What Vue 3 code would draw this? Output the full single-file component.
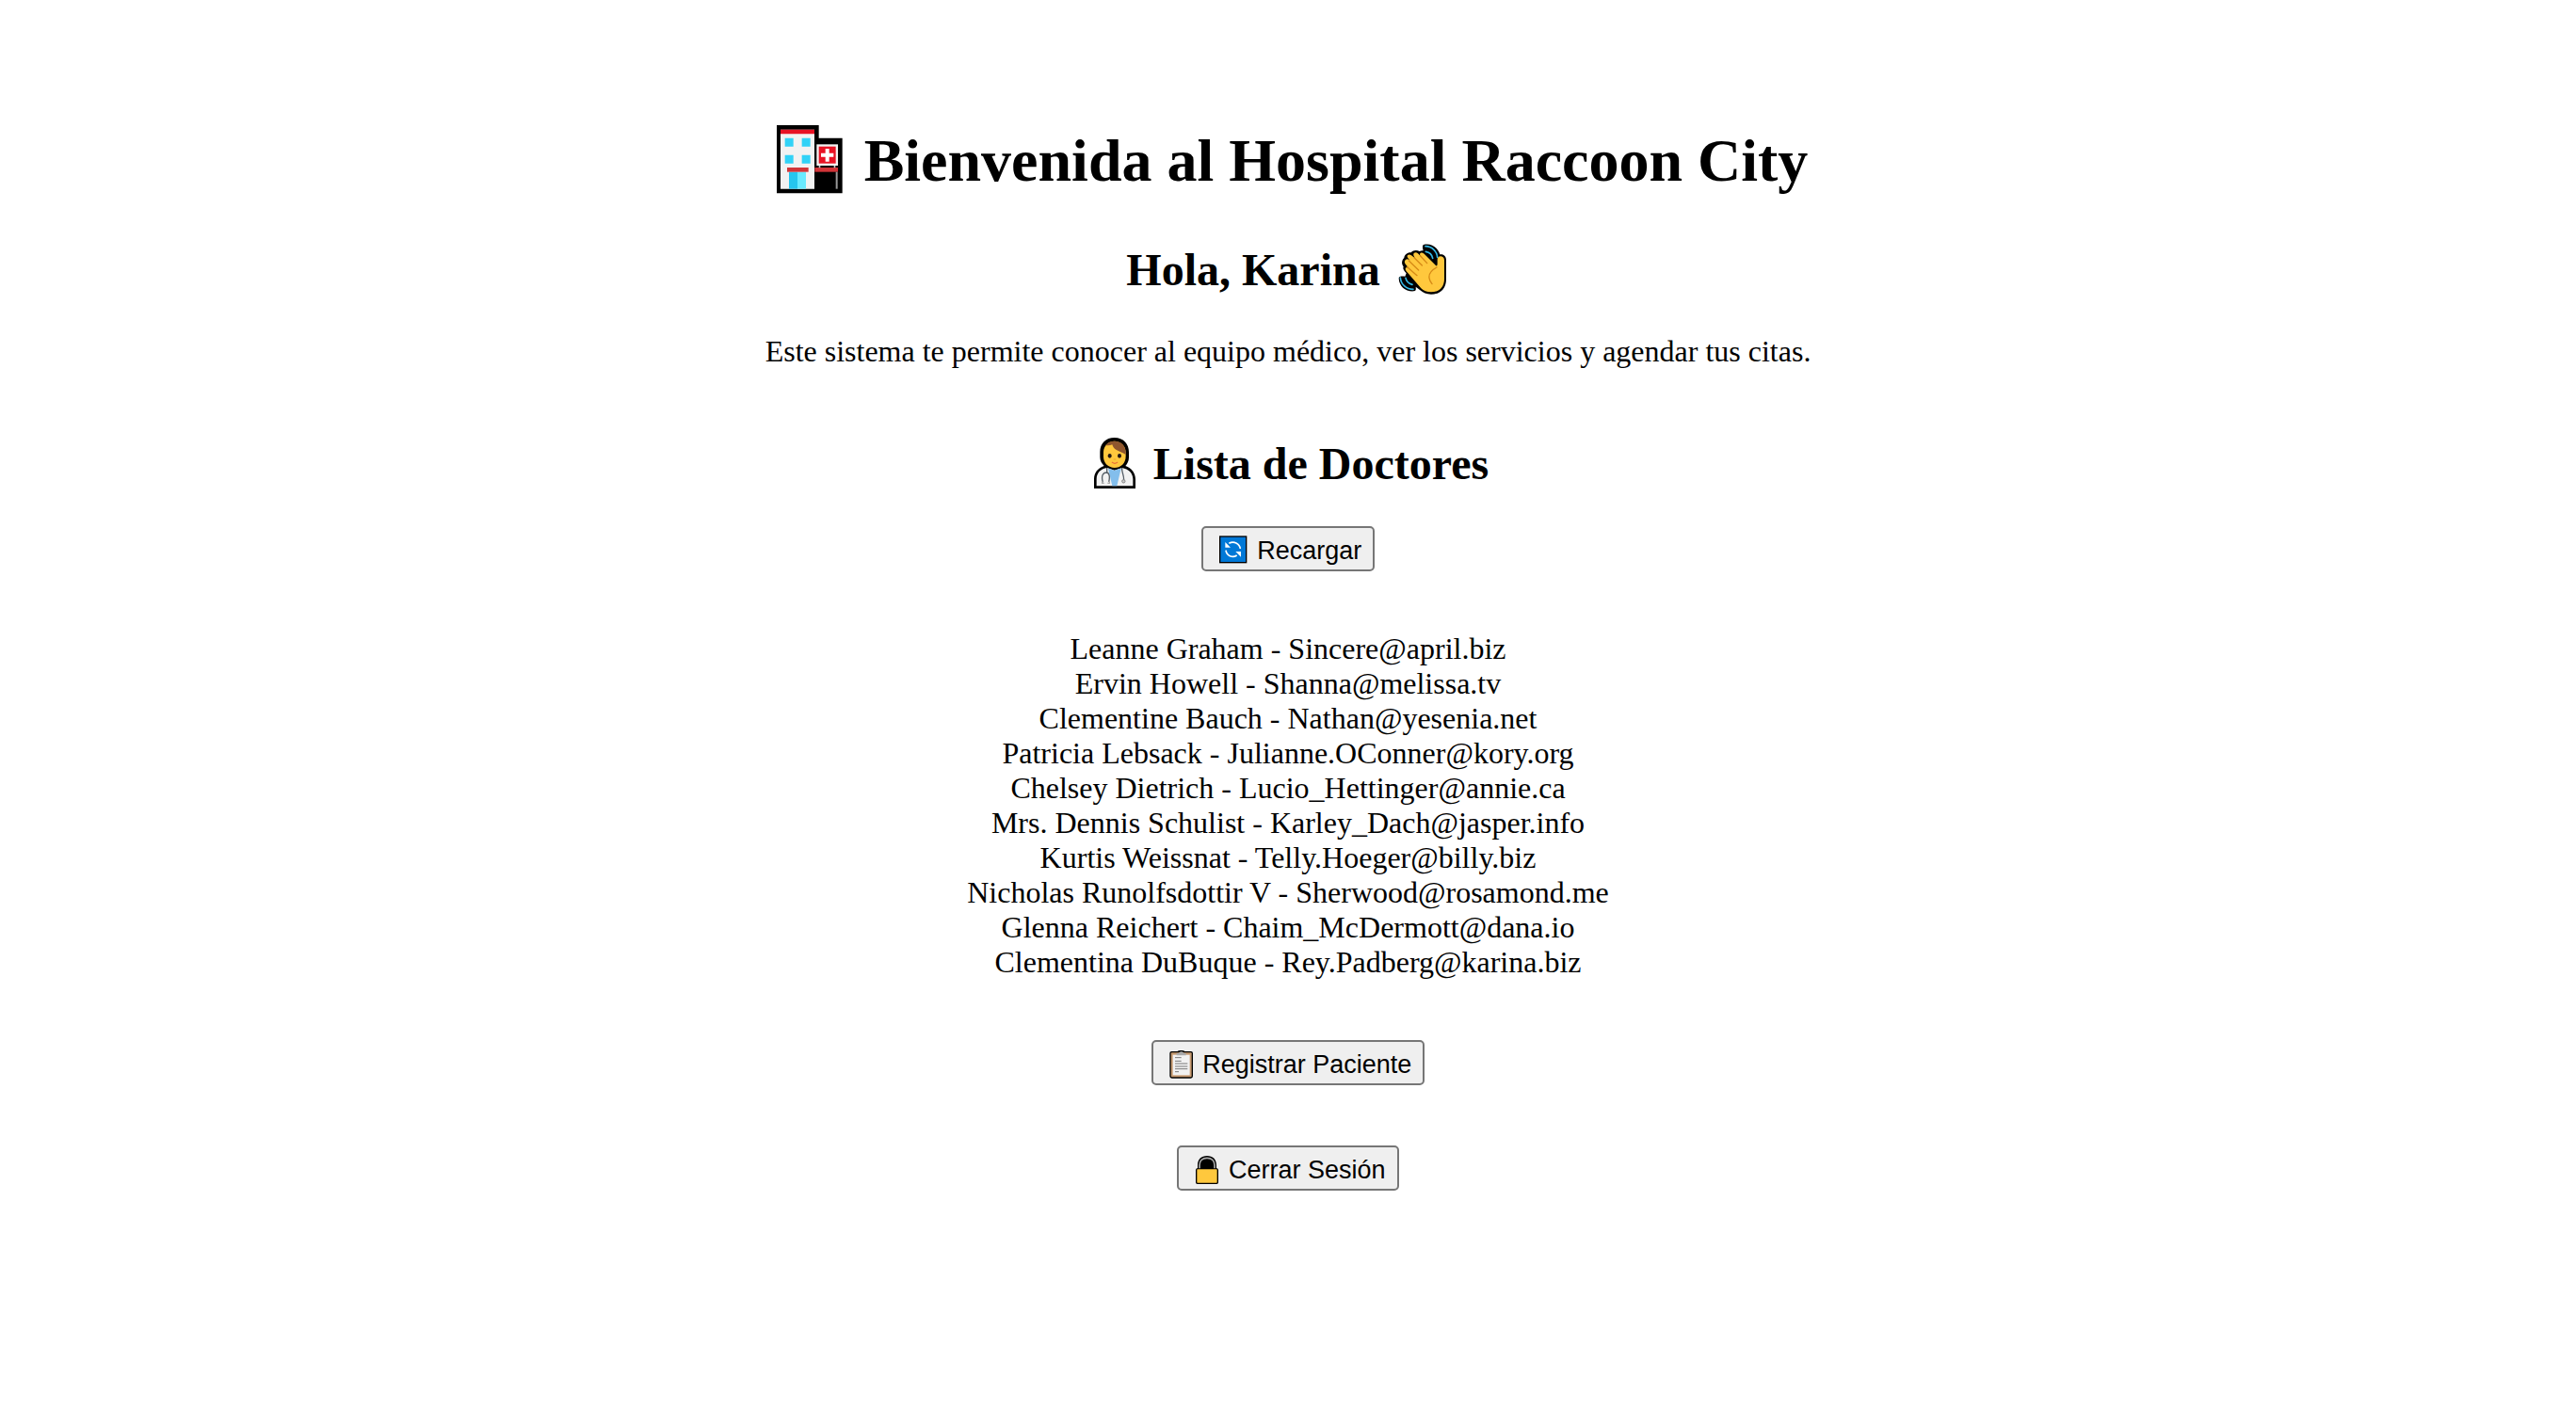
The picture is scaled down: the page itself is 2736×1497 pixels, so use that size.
<script setup>
import { ref } from 'vue'

const nombre = ref('Karina')
const doctores = ref([
  { id: 1, name: 'Leanne Graham', email: 'Sincere@april.biz' },
  { id: 2, name: 'Ervin Howell', email: 'Shanna@melissa.tv' },
  { id: 3, name: 'Clementine Bauch', email: 'Nathan@yesenia.net' },
  { id: 4, name: 'Patricia Lebsack', email: 'Julianne.OConner@kory.org' },
  { id: 5, name: 'Chelsey Dietrich', email: 'Lucio_Hettinger@annie.ca' },
  { id: 6, name: 'Mrs. Dennis Schulist', email: 'Karley_Dach@jasper.info' },
  { id: 7, name: 'Kurtis Weissnat', email: 'Telly.Hoeger@billy.biz' },
  { id: 8, name: 'Nicholas Runolfsdottir V', email: 'Sherwood@rosamond.me' },
  { id: 9, name: 'Glenna Reichert', email: 'Chaim_McDermott@dana.io' },
  { id: 10, name: 'Clementina DuBuque', email: 'Rey.Padberg@karina.biz' }
])
</script>

<template>
  <main class="home">
    <h1>
      <svg class="hospital" viewBox="45 70 258 219" aria-hidden="true">
        <path d="M72 70H206V111H281V287H72Z" fill="#000" />
        <path d="M84 84H192V273H84Z" fill="#f2f2f2" />
        <path d="M84 84H192V98H84Z" fill="#e81224" />
        <path d="M98 111H125V138H98ZM152 111H179V138H152ZM98 165H125V192H98ZM152 165H179V192H152Z" fill="#31d2f7" />
        <path d="M111 219H138V273H111Z" fill="#26c6ee" />
        <path d="M138 219H165V273H138Z" fill="#69eaff" />
        <path d="M105 205H173V219H105Z" fill="#d13438" />
        <path d="M193 205H267V219H193Z" fill="#d13438" />
        <path d="M206 196H211V206H206ZM254 196H259V206H254Z" fill="#ccc" />
        <path d="M199 131H267V199H199Z" fill="#f2f2f2" />
        <path d="M206 138H260V192H206Z" fill="#e81224" />
        <path d="M227 145H239V159H253V171H239V186H227V171H213V159H227Z" fill="#fff" />
        <path d="M260 219H266V273H260Z" fill="#999" />
      </svg>
      Bienvenida al Hospital Raccoon City
    </h1>
    <h2>
      Hola, {{ nombre }}
      <svg class="wave" viewBox="888 57 186 162" aria-hidden="true">
        <path
          d="M990 60C1012 54 1036 68 1042 91C1053 88 1062 97 1062 108V170C1062 200 1043 218 1014 218C999 218 988 213 979 205L965 194C966 202 966 208 960 208C934 211 912 193 911 167C911 160 920 160 931 161L935 151C927 143 923 137 926 130C918 120 921 109 928 102C929 92 939 84 950 85C957 77 968 76 977 81C981 79 985 78 989 79C986 70 986 62 990 60Z"
          fill="#000" />
        <path
          d="M932 109C937 103 942 106 947 111L940 102C933 94 944 87 951 94L963 103L959 96C954 87 965 81 972 88L985 101L979 94C975 85 985 82 992 89L1029 126C1032 129 1034 126 1034 120V107C1034 92 1056 94 1056 109V169C1056 196 1040 211 1014 211C1000 211 990 207 982 199L938 148C930 139 931 134 936 132L946 138L933 123C929 118 928 113 932 109Z"
          fill="#ffc83d" />
        <path
          d="M943 111L974 141M960 101L985 126M980 96L1001 119M938 131L969 158M1032 132C1017 140 1006 153 1008 166C1009 174 1013 180 1017 185"
          fill="none" stroke="#d68a16" stroke-width="4" stroke-linecap="round" />
        <path
          d="M996 65C1016 65 1033 81 1034 100M997 82C1009 84 1017 92 1019 103M916 165C918 187 935 202 957 202M933 166C935 177 944 184 954 187"
          fill="none" stroke="#35b8e6" stroke-width="5" stroke-linecap="round" />
      </svg>
    </h2>
    <p>Este sistema te permite conocer al equipo médico, ver los servicios y agendar tus citas.</p>

    <section class="doctors">
      <h2>
        <svg class="doctor" viewBox="45 42 174 162" aria-hidden="true">
          <path
            d="M131 42C160 42 177 62 177 88V105C177 117 172 125 166 132C186 139 198 155 198 174V204H66V174C66 154 78 139 98 132C91 124 85 116 85 104V88C85 60 103 42 131 42Z"
            fill="#000" />
          <path d="M74 196V174C74 154 88 141 108 138L131 146L155 138C176 142 190 155 190 174V196Z" fill="#f2f2f2" />
          <path d="M111 140L124 196H139L152 140L131 146Z" fill="#83beec" />
          <path d="M96 88C96 69 111 53 131 53C151 53 167 68 167 90V101C167 123 151 138 131 138C112 138 96 124 96 103Z" fill="#ffc83d" />
          <path d="M103 66C109 57 119 53 131 53C153 53 169 68 167 96C155 88 142 84 136 80C130 77 126 72 124 64C118 67 110 68 103 66Z" fill="#8e562e" />
          <ellipse cx="116" cy="100" rx="6" ry="7" fill="#231815" />
          <ellipse cx="147" cy="100" rx="6" ry="7" fill="#231815" />
          <path d="M124 121Q132 127 140 121" fill="none" stroke="#e8703a" stroke-width="4" stroke-linecap="round" />
          <path d="M128 111H136" stroke="#e9a92d" stroke-width="3" />
          <path d="M107 138V153M94 184C88 163 95 153 106 153C115 154 117 167 113 183M155 138C153 151 161 157 161 177" fill="none" stroke="#555e66" stroke-width="4" />
          <path d="M92 180V187H98M115 180V187H109" fill="none" stroke="#aaa" stroke-width="4" />
          <circle cx="160" cy="181" r="5" fill="#ccc" stroke="#858585" stroke-width="3" />
        </svg>
        Lista de Doctores
      </h2>
      <button type="button">
        <svg class="reload" viewBox="90 74 114 90" aria-hidden="true">
          <path d="M105 75H193V162H105Z" fill="#000" />
          <path d="M109 79H189V158H109Z" fill="#0078d7" />
          <path d="M136 99C151 90 170 99 172 116M161 137C147 147 128 138 126 121" fill="none" stroke="#fff" stroke-width="5" />
          <path d="M124 95V112H141ZM174 142V125H157Z" fill="#fff" />
        </svg>
        Recargar
      </button>
      <ul>
        <li v-for="doctor in doctores" :key="doctor.id">{{ doctor.name }} - {{ doctor.email }}</li>
      </ul>
    </section>

    <button type="button">
      <svg class="clipboard" viewBox="81 63 99 90" aria-hidden="true">
        <path d="M103 66H122C125 62 142 62 145 66H165Q171 66 171 72V145Q171 152 164 152H104Q97 152 97 145V72Q97 66 103 66Z" fill="#000" />
        <rect x="101" y="70" width="66" height="78" rx="3" fill="#c69a70" />
        <path d="M107 77H161V142H107Z" fill="#f2f2f2" />
        <path d="M119 79V72H126C128 65 140 65 142 72H149V79Z" fill="#aaa" />
        <path d="M114 86H134M114 97H134M114 105H154M114 114H154M114 122H154M114 131H126" stroke="#777" stroke-width="3" />
      </svg>
      Registrar Paciente
    </button>
    <button type="button">
      <svg class="lock" viewBox="72 68 99 90" aria-hidden="true">
        <path d="M96 107V98C96 79 108 68 126 68C144 68 156 79 156 98V107Q162 108 162 113V153Q162 158 157 158H95Q90 158 90 153V113Q90 108 96 107Z" fill="#000" />
        <path d="M102 108V98C102 83 112 75 126 75C140 75 150 83 150 98V108" fill="none" stroke="#aaa" stroke-width="5" />
        <rect x="94" y="111" width="64" height="43" rx="2" fill="#ffc83d" />
      </svg>
      Cerrar Sesión
    </button>
  </main>
</template>

<style>
body {
  margin: 0;
  background: #fff;
}
</style>

<style scoped>
.home {
  display: flex;
  flex-direction: column;
  align-items: center;
  padding: 133px 16px 64px;
  color: #000;
  font-family: "Liberation Serif", "Times New Roman", serif;
  font-size: 32px;
  line-height: 37px;
  text-align: center;
}

h1,
h2,
p,
ul {
  margin: 0;
}

h1 {
  margin-bottom: 51px;
  font-size: 64px;
  line-height: 74px;
}

h2 {
  margin-bottom: 40px;
  font-size: 48px;
  line-height: 56px;
}

.doctors {
  display: flex;
  flex-direction: column;
  align-items: center;
  margin-top: 73px;
}

.doctors h2 {
  margin-bottom: 38px;
}

ul {
  margin: 64px 0;
  padding: 0;
  list-style: none;
}

button {
  padding: 6px 12px 2px;
  border: 2px solid #767676;
  border-radius: 5px;
  background: #efefef;
  color: #000;
  font-family: "Liberation Sans", Arial, sans-serif;
  font-size: 27px;
  line-height: 36px;
}

button + button {
  margin-top: 64px;
}

.hospital {
  width: 86px;
  height: 73px;
  vertical-align: -14px;
}

.wave {
  width: 62px;
  height: 54px;
  vertical-align: -10px;
}

.doctor {
  width: 58px;
  height: 54px;
  vertical-align: -10px;
}

.reload {
  width: 38px;
  height: 30px;
  vertical-align: -5px;
}

.clipboard,
.lock {
  width: 33px;
  height: 30px;
  vertical-align: -6px;
}
</style>
